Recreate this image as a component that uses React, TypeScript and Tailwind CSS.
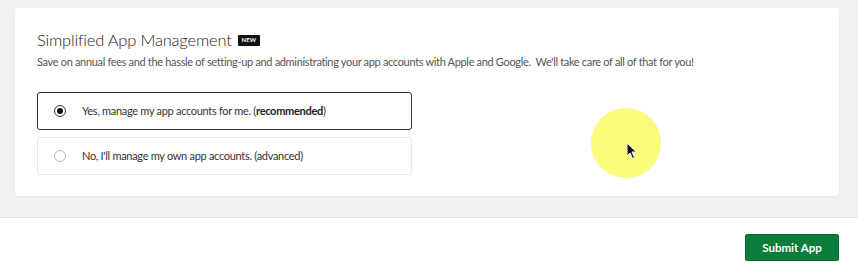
import React, { useState } from "react";

const font = { fontFamily: '"Lato", "Liberation Sans", sans-serif' };

type Option = { id: string; label: React.ReactNode };

const options: Option[] = [
  {
    id: "managed",
    label: (
      <>
        Yes, manage my app accounts for me. (<b className="font-bold text-[#222]">recommended</b>)
      </>
    ),
  },
  { id: "own", label: "No, I'll manage my own app accounts. (advanced)" },
];

export default function App() {
  const [choice, setChoice] = useState("managed");

  return (
    <div className="w-[858px] h-[274px] bg-white relative overflow-hidden" style={font}>
      {/* content area */}
      <div className="bg-[#eff1f3] h-[218px] pt-2 px-[15px] border-b border-[#e2e5e8]">
        <div className="bg-white rounded-[4px] h-[188px] w-[824px] pl-[22px] pt-[21px] shadow-[0_1px_2px_rgba(0,0,0,0.04)]">
          <div className="flex items-center gap-[6px]">
            <h2 className="text-[16.5px] leading-[22px] font-light tracking-[-0.2px] text-[#222]">
              Simplified App Management
            </h2>
            <span className="bg-[#111] text-white text-[6px] font-bold leading-none px-[4px] py-[2.5px] rounded-[1px]">
              NEW
            </span>
          </div>
          <p className="mt-[3px] text-[11px] leading-[16px] tracking-[-0.33px] text-[#555]">
            Save on annual fees and the hassle of setting-up and administrating your app accounts with Apple and
            Google.&nbsp; We'll take care of all of that for you!
          </p>

          <div className="mt-[22px] flex flex-col gap-[7px] w-[375px]">
            {options.map((o) => {
              const active = choice === o.id;
              return (
                <label
                  key={o.id}
                  onClick={() => setChoice(o.id)}
                  className={`h-[38px] flex items-center rounded-[3px] border bg-white cursor-pointer pl-[16px] ${
                    active ? "border-[#333] border-[1.5px]" : "border-[#e6e8ea]"
                  }`}
                >
                  <span
                    className={`w-[12px] h-[12px] rounded-full border flex items-center justify-center ${
                      active ? "border-[#333]" : "border-[#b8b8b8]"
                    }`}
                  >
                    {active && <span className="w-[6px] h-[6px] rounded-full bg-[#111]" />}
                  </span>
                  <span className="ml-[16px] text-[11px] tracking-[-0.3px] text-[#333]">{o.label}</span>
                </label>
              );
            })}
          </div>
        </div>
      </div>

      {/* footer */}
      <div className="flex justify-end pr-[19px] pt-[16px]">
        <button className="w-[94px] h-[27px] bg-[#0b7d3b] border border-[#08692f] rounded-[2px] text-white text-[11.5px] font-bold">
          Submit App
        </button>
      </div>

      {/* click highlight + cursor */}
      <div className="absolute left-[591px] top-[108px] w-[70px] h-[70px] rounded-full bg-[#fbfb7c]" />
      <svg className="absolute left-[626px] top-[142px]" width="12" height="18" viewBox="0 0 12 18">
        <path d="M1 1 L1 14 L4 11 L6.5 16.5 L8.5 15.5 L6 10 L10.5 10 Z" fill="#111" stroke="#fff" strokeWidth="1" />
      </svg>
    </div>
  );
}
